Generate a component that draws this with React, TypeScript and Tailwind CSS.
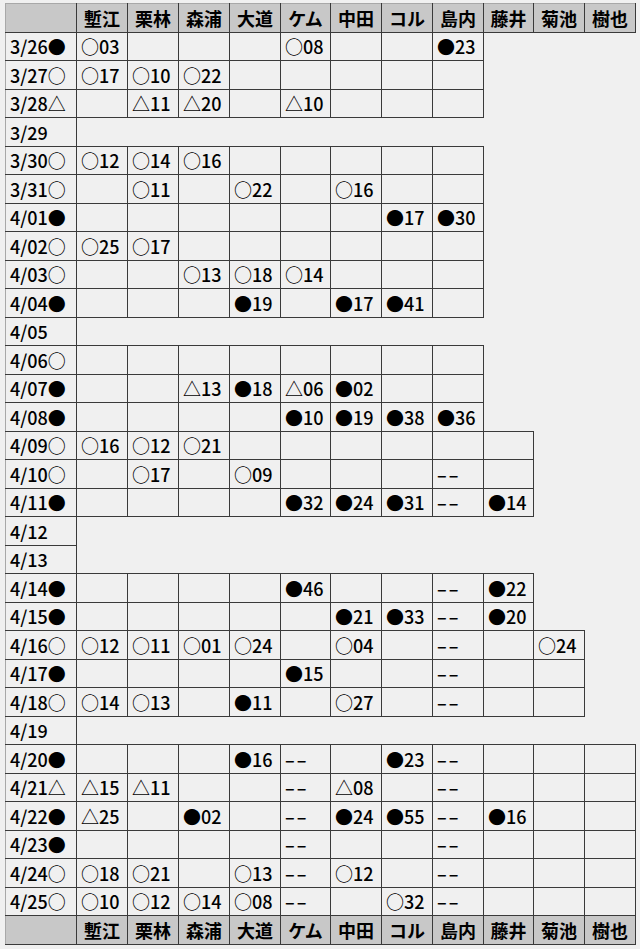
import React from 'react';

const names = ['塹江', '栗林', '森浦', '大道', 'ケム', '中田', 'コル', '島内', '藤井', '菊池', '樹也'];
const widths = ['w-[51px]', 'w-[51px]', 'w-[51px]', 'w-[51px]', 'w-[50px]', 'w-[51px]', 'w-[51px]', 'w-[51px]', 'w-[50px]', 'w-[51px]', 'w-[51px]'];

// each row: date label, then one entry per cell that is drawn (rows are ragged)
const rows: Array<[string, string[]]> = [
  ['3/26●', ['○03', '', '', '', '○08', '', '', '●23']],
  ['3/27○', ['○17', '○10', '○22', '', '', '', '', '']],
  ['3/28△', ['', '△11', '△20', '', '△10', '', '', '']],
  ['3/29', []],
  ['3/30○', ['○12', '○14', '○16', '', '', '', '', '']],
  ['3/31○', ['', '○11', '', '○22', '', '○16', '', '']],
  ['4/01●', ['', '', '', '', '', '', '●17', '●30']],
  ['4/02○', ['○25', '○17', '', '', '', '', '', '']],
  ['4/03○', ['', '', '○13', '○18', '○14', '', '', '']],
  ['4/04●', ['', '', '', '●19', '', '●17', '●41', '']],
  ['4/05', []],
  ['4/06○', ['', '', '', '', '', '', '', '']],
  ['4/07●', ['', '', '△13', '●18', '△06', '●02', '', '']],
  ['4/08●', ['', '', '', '', '●10', '●19', '●38', '●36']],
  ['4/09○', ['○16', '○12', '○21', '', '', '', '', '', '']],
  ['4/10○', ['', '○17', '', '○09', '', '', '', '--', '']],
  ['4/11●', ['', '', '', '', '●32', '●24', '●31', '--', '●14']],
  ['4/12', []],
  ['4/13', []],
  ['4/14●', ['', '', '', '', '●46', '', '', '--', '●22']],
  ['4/15●', ['', '', '', '', '', '●21', '●33', '--', '●20']],
  ['4/16○', ['○12', '○11', '○01', '○24', '', '○04', '', '--', '', '○24']],
  ['4/17●', ['', '', '', '', '●15', '', '', '--', '', '']],
  ['4/18○', ['○14', '○13', '', '●11', '', '○27', '', '--', '', '']],
  ['4/19', []],
  ['4/20●', ['', '', '', '●16', '--', '', '●23', '--', '', '', '']],
  ['4/21△', ['△15', '△11', '', '', '--', '△08', '', '--', '', '', '']],
  ['4/22●', ['△25', '', '●02', '', '--', '●24', '●55', '--', '●16', '', '']],
  ['4/23●', ['', '', '', '', '--', '', '', '--', '', '', '']],
  ['4/24○', ['○18', '○21', '', '○13', '--', '○12', '', '--', '', '', '']],
  ['4/25○', ['○10', '○12', '○14', '○08', '--', '', '○32', '--', '', '', '']],
];

function Cell({ text }: { text: string }) {
  if (text === '--') {
    return <span className="tracking-[2px]">––</span>;
  }
  return <>{text}</>;
}

function NameRow({ bottom }: { bottom?: boolean }) {
  return (
    <tr className="h-[28.5px]">
      <th className={`border border-[#3a3a3a] border-l-[#a8a8a8] bg-[#c8c8c8] ${bottom ? '' : 'border-t-[#a8a8a8]'}`}></th>
      {names.map((n) => (
        <th
          key={n}
          className={`border border-[#3a3a3a] bg-[#c8c8c8] px-[3px] text-center font-bold ${bottom ? '' : 'border-t-[#a8a8a8]'}`}
        >
          {n}
        </th>
      ))}
    </tr>
  );
}

export default function App() {
  return (
    <div className="min-h-[949px] w-[640px] bg-[#f0f0f0] pt-[3px] pl-[5px]">
      <table
        className="table-fixed border-collapse text-[18px] leading-none font-medium text-black"
        style={{ fontFamily: '"Noto Sans CJK JP", "Noto Sans", sans-serif' }}
      >
        <colgroup>
          <col className="w-[71px]" />
          {widths.map((w, i) => (
            <col key={i} className={w} />
          ))}
        </colgroup>
        <thead>
          <NameRow />
        </thead>
        <tbody>
          {rows.map(([date, cells]) => (
            <tr key={date} className="h-[28.5px]">
              <td className="border border-[#3a3a3a] border-l-[#a8a8a8] px-[4px] whitespace-nowrap">{date}</td>
              {cells.map((c, i) => (
                <td key={i} className="border border-[#3a3a3a] px-[4px] whitespace-nowrap">
                  <Cell text={c} />
                </td>
              ))}
            </tr>
          ))}
        </tbody>
        <tfoot>
          <NameRow bottom />
        </tfoot>
      </table>
    </div>
  );
}
